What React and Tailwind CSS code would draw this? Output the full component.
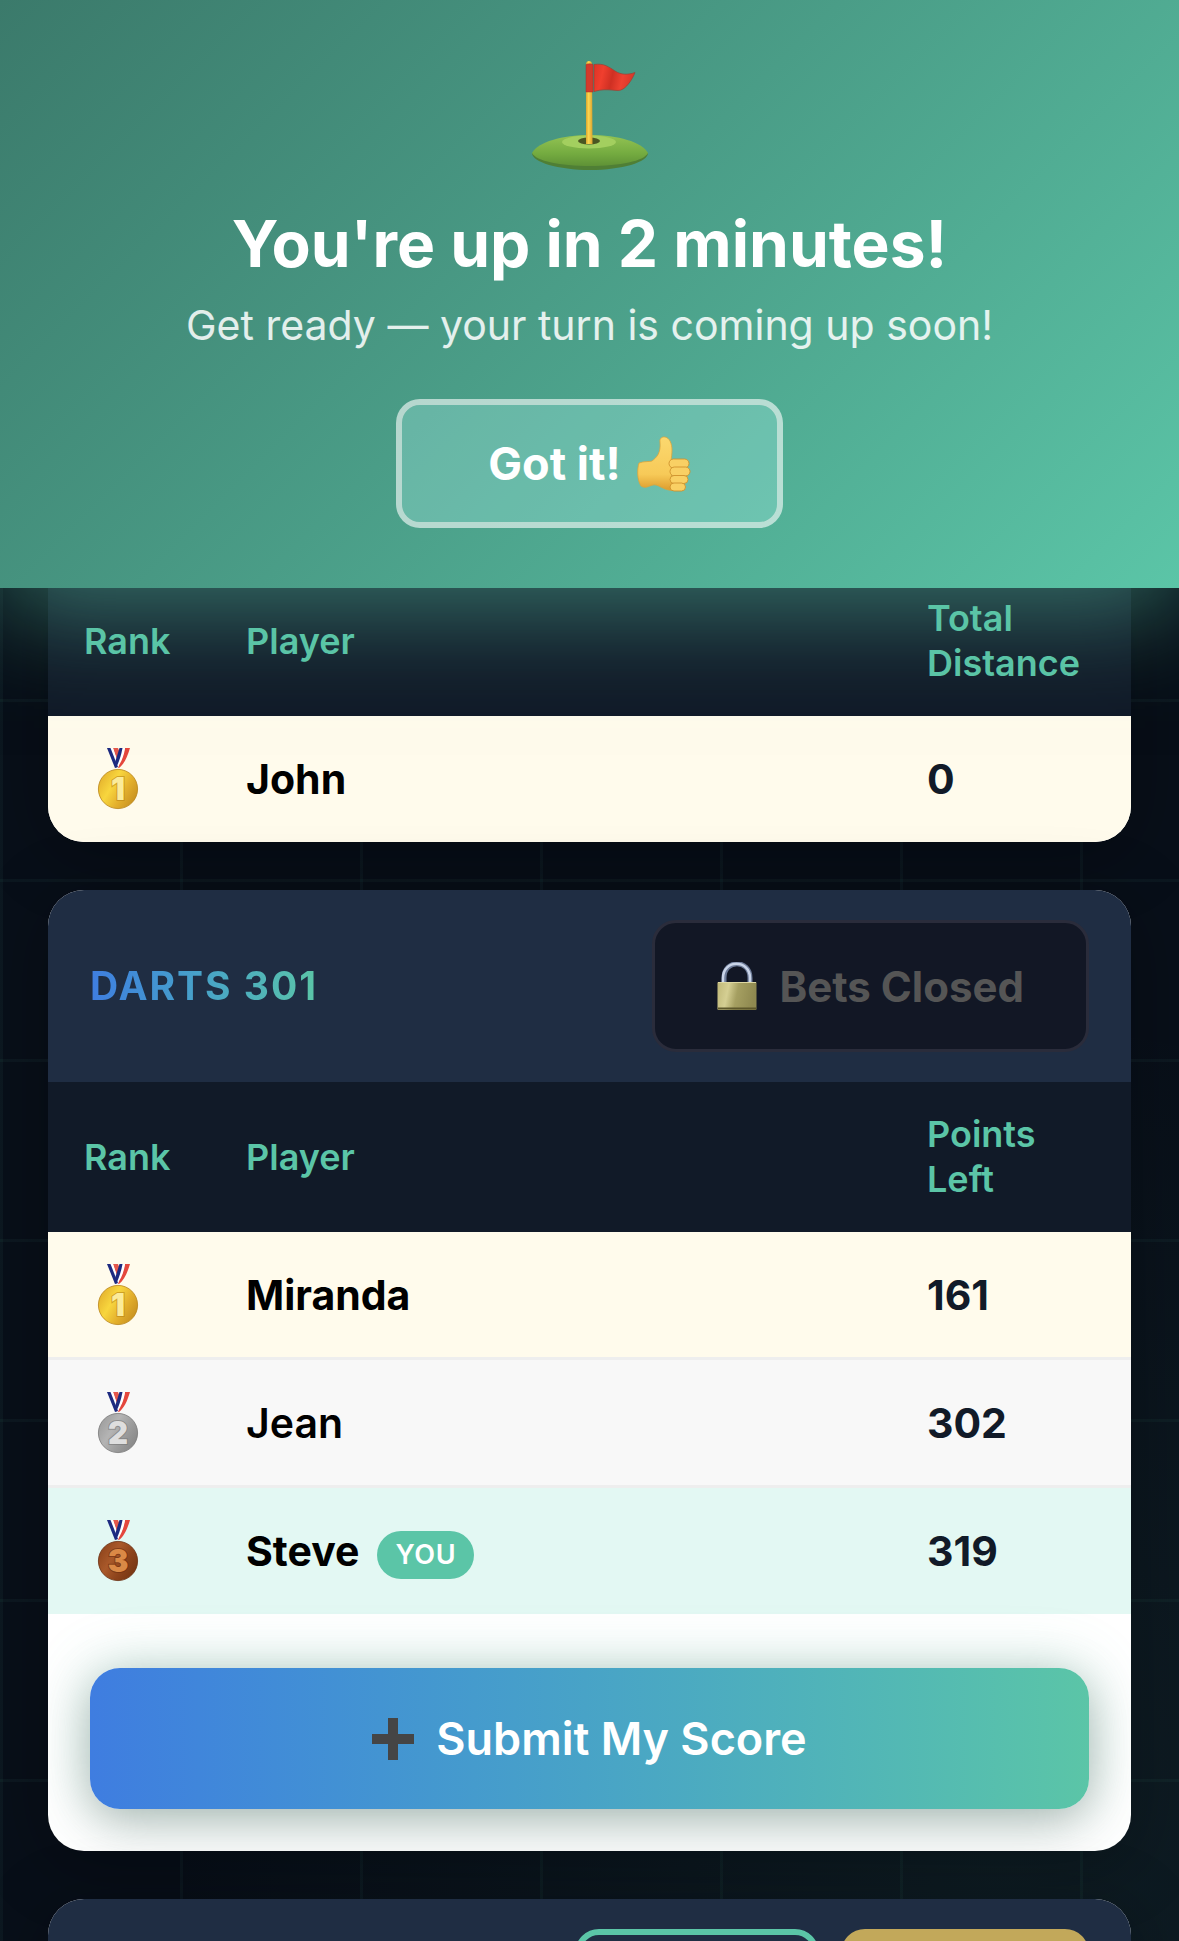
import React, { useState } from "react";

const golf = {
  scoreLabel: "Total Distance",
  players: [{ rank: 1, name: "John", score: 0 }],
};

const darts = {
  title: "DARTS 301",
  scoreLabel: "Points Left",
  players: [
    { rank: 1, name: "Miranda", score: 161 },
    { rank: 2, name: "Jean", score: 302 },
    { rank: 3, name: "Steve", score: 319, isYou: true },
  ],
};

const medals = {
  1: { light: "#f8d63e", mid: "#e3af2c", dark: "#c48d1f", digit: "#fbeb9a", edge: "#b98416" },
  2: { light: "#b4b4b4", mid: "#9c9c9c", dark: "#858585", digit: "#dedede", edge: "#777777" },
  3: { light: "#a9592a", mid: "#8d431b", dark: "#743512", digit: "#da8946", edge: "#6a2d0f" },
};

const Medal = ({ rank }) => {
  const medal = medals[rank];

  return (
    <svg viewBox="0 0 68 62" className="block h-[62px] w-[68px]" role="img" aria-label={`Rank ${rank}`}>
      <defs>
        <linearGradient id={`medal-${rank}`} x1="0" y1="0.2" x2="1" y2="0.8">
          <stop offset="0" stopColor={medal.mid} />
          <stop offset="0.35" stopColor={medal.light} />
          <stop offset="0.65" stopColor={medal.mid} />
          <stop offset="1" stopColor={medal.dark} />
        </linearGradient>
      </defs>
      <path d="M29 0 L34 0 L38 10 L35 18 Z" fill="#e4574b" />
      <path d="M41 0 L46 0 C43 10 40 16 35 20 L33 19 C37 14 39 8 41 0 Z" fill="#e4473d" />
      <path d="M38 0 L41 0 C40 8 37 15 33 20 L31 19 Z" fill="#ffffff" />
      <path d="M26 0 L29 0 L35 18 L33 20 Z" fill="#ffffff" />
      <path d="M23 0 L26.500 0 L34 19 L31 20 Z" fill="#1d2a80" />
      <path d="M35.500 0 L38.500 0 C37 8 35 14 32 20 L30.500 16 Z" fill="#1d2a80" />
      <circle cx="34" cy="41" r="19.600" fill={`url(#medal-${rank})`} stroke={medal.edge} strokeWidth="0.800" />
      <g textAnchor="middle" fontSize="31" fontWeight="900" className="font-['Inter',sans-serif]">
        <text x="34" y="52" fill={medal.digit} stroke={medal.edge} strokeWidth="2" strokeOpacity="0.6" paintOrder="stroke">
          {rank}
        </text>
      </g>
    </svg>
  );
};

const GolfFlag = () => (
  <svg viewBox="0 0 120 112" className="h-28 w-30" aria-hidden="true">
    <defs>
      <linearGradient id="green" x1="0" y1="0" x2="0" y2="1">
        <stop offset="0" stopColor="#93c353" />
        <stop offset="0.6" stopColor="#74ab40" />
        <stop offset="1" stopColor="#5f9236" />
      </linearGradient>
      <linearGradient id="pole" x1="0" y1="0" x2="1" y2="0">
        <stop offset="0" stopColor="#d9a62e" />
        <stop offset="0.4" stopColor="#fbd650" />
        <stop offset="1" stopColor="#dca32f" />
      </linearGradient>
      <linearGradient id="cloth" x1="0" y1="0" x2="1" y2="0.15">
        <stop offset="0" stopColor="#dc3426" />
        <stop offset="0.25" stopColor="#f03f2e" />
        <stop offset="0.5" stopColor="#cf3023" />
        <stop offset="0.75" stopColor="#ee4231" />
        <stop offset="1" stopColor="#d83829" />
      </linearGradient>
    </defs>
    <path d="M2 93 C2 102 28 110 60 110 C92 110 118 102 118 93 Z" fill="#4f7f35" />
    <path d="M2 93 C8 82 32 75 60 75 C88 75 112 82 118 93 C114 101 90 106 60 106 C30 106 6 101 2 93 Z" fill="url(#green)" />
    <ellipse cx="59" cy="82" rx="27" ry="6.500" fill="#a3cf5f" />
    <ellipse cx="59" cy="81" rx="11" ry="3.500" fill="#4a5522" />
    <path d="M56 4 C56 0 62 0 62 4 L62.500 84 L56 84 Z" fill="url(#pole)" />
    <path d="M56 4.500 C58 3.500 61 3.500 63 4.500 L63 32 L56 32 Z" fill="#d33a2b" stroke="#a03329" strokeWidth="0.500" />
    <path
      d="M64 4.500 C74 3 79 7 85 11 C91 15 98 15 105 12.500 C103 18 98 26 93 29 C87 33 79 27 64 31.500 Z"
      fill="url(#cloth)"
      stroke="#9a4034"
      strokeWidth="0.700"
    />
  </svg>
);

const ThumbsUp = () => (
  <svg viewBox="0 0 54 58" className="h-[58px] w-[54px]" aria-hidden="true">
    <defs>
      <linearGradient id="hand" x1="0" y1="0" x2="0" y2="1">
        <stop offset="0" stopColor="#fbd86f" />
        <stop offset="0.7" stopColor="#f7ca58" />
        <stop offset="1" stopColor="#dd9c2d" />
      </linearGradient>
    </defs>
    <path
      d="M2 28 C7 26 12 27 15 26 C20 22 24 18 23 7 C22 1 30 0 33 6 C36 12 35 18 34 26 L35 50 C38 54 36 56 32 55 C25 54 21 49 16 50 C11 51 9 54 4 51 C0 45 0 34 2 28 Z"
      fill="url(#hand)"
      stroke="#dda43a"
      strokeWidth="0.800"
    />
    <g fill="#f9d064" stroke="#cf922c" strokeWidth="0.900">
      <rect x="32" y="24" width="20" height="9" rx="4.500" />
      <rect x="33" y="32" width="20" height="9" rx="4.500" />
      <rect x="33" y="40.500" width="18" height="8" rx="4" />
      <rect x="33" y="48" width="15.500" height="8" rx="4" />
    </g>
  </svg>
);

const Lock = () => (
  <svg viewBox="0 0 40 48" className="h-12 w-10 shrink-0" aria-hidden="true">
    <defs>
      <linearGradient id="brass" x1="0" y1="0" x2="1" y2="0.15">
        <stop offset="0" stopColor="#bfb878" />
        <stop offset="0.3" stopColor="#d5cf93" />
        <stop offset="0.55" stopColor="#a59f61" />
        <stop offset="1" stopColor="#8f8950" />
      </linearGradient>
    </defs>
    <path d="M7 22 V16 C7 -3 33 -3 33 16 V22" fill="none" stroke="#6d7b98" strokeWidth="5" />
    <path d="M6 22 V16 C6 -3 33 -3 33 16 V22" fill="none" stroke="#c9d4e8" strokeWidth="2.500" />
    <rect x="0.500" y="20" width="39" height="28" rx="1" fill="url(#brass)" />
    <path d="M1 20.500 H39" stroke="#ded8a2" strokeWidth="1" />
    <path d="M1 46.500 H39" stroke="#5d572b" strokeWidth="2" />
  </svg>
);

const Plus = () => (
  <svg viewBox="0 0 42 42" className="h-[42px] w-[42px]" aria-hidden="true">
    <path d="M16 0 H26 V16 H42 V26 H26 V42 H16 V26 H0 V16 H16 Z" fill="#454545" />
  </svg>
);

const rowColor = (player) => {
  if (player.isYou) return "bg-[#e3f8f3]";
  if (player.rank === 1) return "bg-[#fffbec]";
  return "bg-[#f8f8f8]";
};

const Leaderboard = ({ label, scoreLabel, players }) => (
  <table aria-label={label} className="w-full table-fixed border-separate border-spacing-0 text-left">
    <thead className="bg-[#111a28] text-[36px] leading-[45px] text-[#5bc5a7]">
      <tr>
        <th className="w-[162px] py-[30px] pl-9 font-semibold">Rank</th>
        <th className="py-[30px] pl-9 font-semibold">Player</th>
        <th className="w-[240px] py-[30px] pr-9 pl-9 font-semibold">{scoreLabel}</th>
      </tr>
    </thead>
    <tbody className="text-[41px] leading-[60px]">
      {players.map((player) => (
        <tr
          key={player.name}
          className={`${rowColor(player)} *:h-32 *:border-b-[3px] *:border-[#eeeeee] last:*:h-[126px] last:*:border-b-0`}
        >
          <td className="pl-9">
            <Medal rank={player.rank} />
          </td>
          <td className={player.rank === 2 ? "pl-9 font-semibold text-black" : "pl-9 font-bold text-black"}>
            {player.name}
            {player.isYou && (
              <span className="ml-[18px] inline-block rounded-full bg-[#5bc5a7] px-[18px] align-middle text-[27px] leading-12 font-semibold tracking-wide text-white">
                YOU
              </span>
            )}
          </td>
          <td className="pl-9 font-bold text-[#111a28]">{player.score}</td>
        </tr>
      ))}
    </tbody>
  </table>
);

const Card = ({ joined, children }) => (
  <section
    className={`overflow-hidden bg-white shadow-[0_12px_72px_rgba(0,0,0,0.3)] ${joined ? "rounded-b-[36px]" : "rounded-[36px]"}`}
  >
    {children}
  </section>
);

const App = () => {
  const [showAlert, setShowAlert] = useState(true);

  return (
    <div className="h-screen overflow-hidden bg-[#080f19] bg-[linear-gradient(to_right,rgba(91,197,167,0.05)_3px,transparent_3px),linear-gradient(to_bottom,rgba(91,197,167,0.05)_3px,transparent_3px),radial-gradient(circle_at_85%_95%,rgba(91,197,167,0.08),transparent_40%)] bg-[size:180px_180px,180px_180px,auto] bg-[position:0_0,0_159px,0_0] font-['Inter',sans-serif]">
      {showAlert && (
        <header
          role="alert"
          className="relative z-10 flex flex-col items-center bg-linear-135 from-[#3b7a6b] to-[#5bc5a7] px-12 pt-[60px] pb-[60px] text-center text-white shadow-[0_24px_96px_rgba(91,197,167,0.5)]"
        >
          <GolfFlag />
          <h1 className="mt-8 text-[64px] leading-[80px] font-bold">You're up in 2 minutes!</h1>
          <p className="mt-4 text-[41px] leading-[50px] text-white/85">Get ready — your turn is coming up soon!</p>
          <button
            onClick={() => setShowAlert(false)}
            className="mt-[49px] flex items-center gap-4 rounded-[24px] border-[6px] border-white/60 bg-[#c0ffff]/25 bg-clip-padding px-[86px] py-7 text-[45px] leading-[61px] font-bold"
          >
            Got it! <ThumbsUp />
          </button>
        </header>
      )}

      <main className="-mt-[22px] flex flex-col gap-12 px-12">
        <Card joined>
          <Leaderboard label="Golf" scoreLabel={golf.scoreLabel} players={golf.players} />
        </Card>

        <Card>
          <div className="flex items-center justify-between bg-[#1f2d43] px-[42px] py-[30px]">
            <h2 className="bg-linear-to-r from-[#3f7de0] to-[#5bc5a7] bg-clip-text text-[39px] leading-12 font-bold tracking-wider text-transparent">
              {darts.title}
            </h2>
            <button
              disabled
              className="flex h-[132px] items-center gap-[22px] rounded-[24px] border-[3px] border-[#2a2c3b] bg-[#121725] px-[62px] text-[42px] font-bold text-[#555555]"
            >
              <Lock /> Bets Closed
            </button>
          </div>
          <Leaderboard label={darts.title} scoreLabel={darts.scoreLabel} players={darts.players} />
          <div className="px-[42px] pt-[54px] pb-[42px]">
            <button className="flex h-[141px] w-full items-center justify-center gap-[22px] rounded-[30px] bg-linear-to-r from-[#3f7de0] to-[#5bc5a7] text-[45px] font-semibold text-white shadow-[0_12px_48px_rgba(0,0,0,0.25),0_0_60px_rgba(91,197,167,0.3)]">
              <Plus /> Submit My Score
            </button>
          </div>
        </Card>

        <Card>
          <div className="flex justify-end gap-[22px] bg-[#1f2d43] px-[42px] py-[30px]">
            <button aria-label="My bets" className="h-[132px] w-[244px] rounded-[24px] border-[6px] border-[#5bc5a7]" />
            <button aria-label="Place bet" className="h-[132px] w-[248px] rounded-[24px] bg-[#c2a85a]" />
          </div>
        </Card>
      </main>
    </div>
  );
};

export default App;
